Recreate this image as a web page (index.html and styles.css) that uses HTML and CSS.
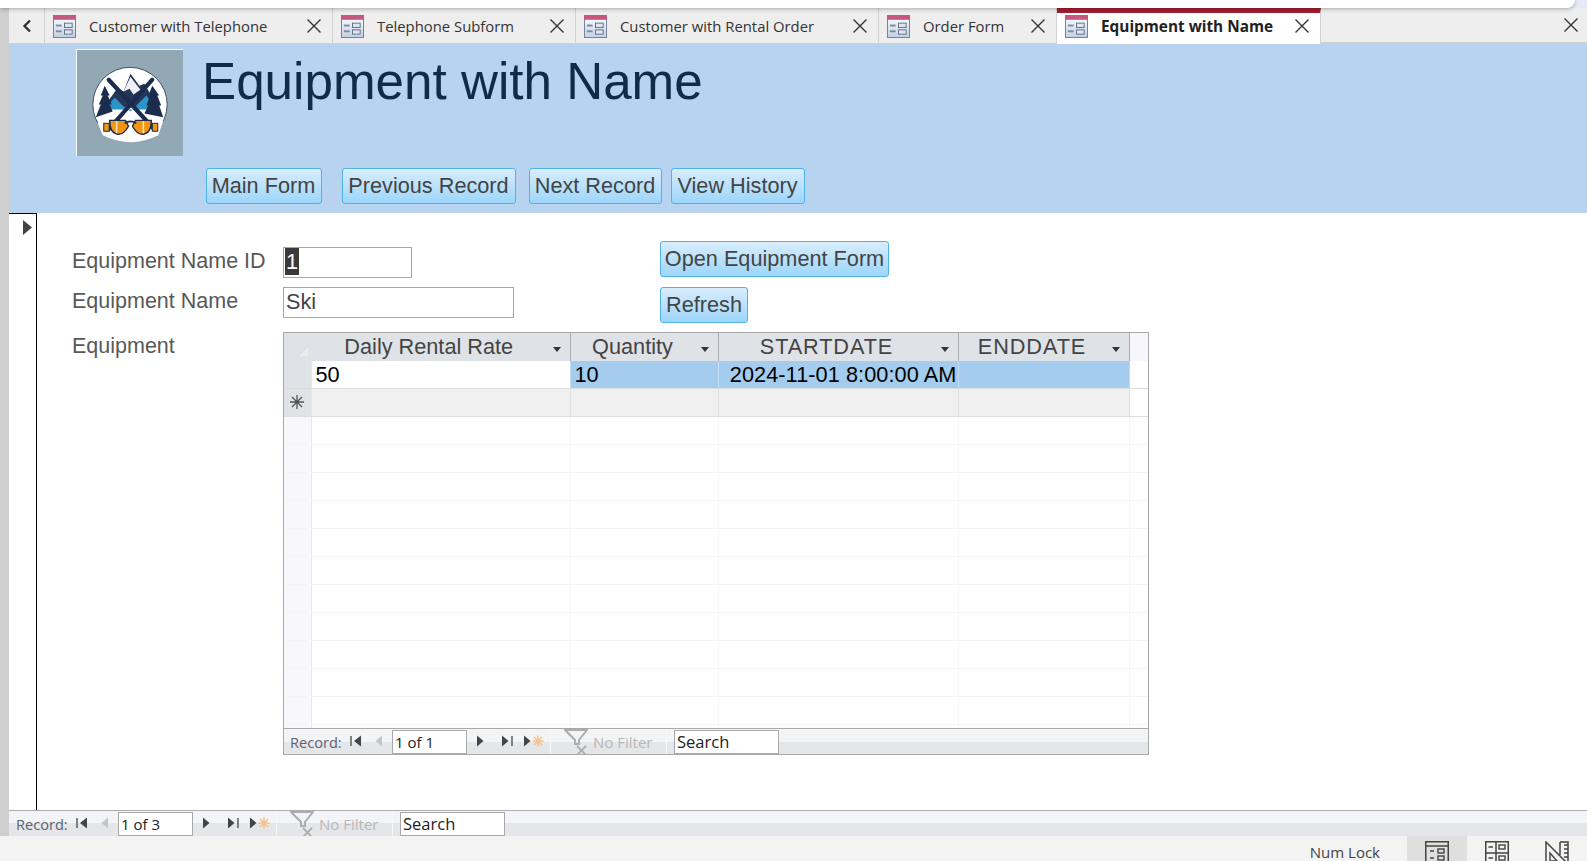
FILE: index.html
```html
<!DOCTYPE html>
<html lang="en">
<head>
    <meta charset="UTF-8">
    <title>Equipment with Name</title>
    <link rel="stylesheet" href="styles.css">
</head>
<body>

<svg class="defs" width="0" height="0">
    <defs>
        <linearGradient id="form-body" x1="0" y1="0" x2="0" y2="1">
            <stop offset="0" stop-color="#ffffff"/>
            <stop offset="1" stop-color="#c3d0e4"/>
        </linearGradient>
        <symbol id="i-form" viewBox="0 0 24 24">
            <rect x="0.5" y="0.5" width="23" height="23" fill="url(#form-body)" stroke="#6d7f9c"/>
            <rect x="0" y="0" width="24" height="5" fill="#c4587f"/>
            <rect x="3" y="10" width="6" height="2" fill="#7c8ba3"/>
            <rect x="3" y="16" width="6" height="2" fill="#7c8ba3"/>
            <rect x="12" y="8.5" width="8" height="4.5" fill="#dfe6f1" stroke="#63708a"/>
            <rect x="12" y="15.5" width="8" height="4.5" fill="#dfe6f1" stroke="#63708a"/>
        </symbol>
        <symbol id="i-close" viewBox="0 0 14 14">
            <path d="M0.5 0.5 L13.5 13.5 M13.5 0.5 L0.5 13.5" stroke="#333" stroke-width="1.4" fill="none"/>
        </symbol>
        <symbol id="i-first" viewBox="0 0 12 12">
            <path d="M1 1 V11" stroke="#444" stroke-width="1.3"/>
            <path d="M11 0.5 V11.5 L4 6 Z" fill="#444"/>
        </symbol>
        <symbol id="i-prev" viewBox="0 0 7 12">
            <path d="M7 0.5 V11.5 L0.5 6 Z" fill="#c4c4c4"/>
        </symbol>
        <symbol id="i-next" viewBox="0 0 7 12">
            <path d="M0 0.5 V11.5 L6.5 6 Z" fill="#444"/>
        </symbol>
        <symbol id="i-last" viewBox="0 0 11 12">
            <path d="M0 0.5 V11.5 L6.5 6 Z" fill="#444"/>
            <path d="M10 1 V11" stroke="#444" stroke-width="1.3"/>
        </symbol>
        <symbol id="i-new" viewBox="0 0 20 12">
            <path d="M0 0.5 V11.5 L6.5 6 Z" fill="#444"/>
            <path d="M14 0.5 V11.5 M8.5 6 H19.5 M10 2 L18 10 M18 2 L10 10" stroke="#f2c68a" stroke-width="1.6"/>
        </symbol>
        <symbol id="i-filter" viewBox="0 0 24 26">
            <path d="M1 1 H23 L15 11 V15 H11 V11 Z" fill="none" stroke="#adadad" stroke-width="2"/>
            <path d="M13 17 L22 26 M22 17 L13 26" stroke="#adadad" stroke-width="1.8"/>
        </symbol>
    </defs>
</svg>

<div class="top-strip"><div class="top-window"></div></div>

<div class="main">
    <div class="edge"></div>
    <div class="workspace">

        <div class="tabs">
            <div class="tab tab-back">
                <svg width="10" height="14" viewBox="0 0 10 14"><path d="M8 1.5 L2.5 7 L8 12.5" fill="none" stroke="#333" stroke-width="2.4"/></svg>
            </div>
            <div class="tab">
                <svg class="tab-icon"><use href="#i-form"/></svg>
                <span class="tab-text">Customer with Telephone</span>
                <svg class="tab-close"><use href="#i-close"/></svg>
            </div>
            <div class="tab">
                <svg class="tab-icon"><use href="#i-form"/></svg>
                <span class="tab-text">Telephone Subform</span>
                <svg class="tab-close"><use href="#i-close"/></svg>
            </div>
            <div class="tab">
                <svg class="tab-icon"><use href="#i-form"/></svg>
                <span class="tab-text">Customer with Rental Order</span>
                <svg class="tab-close"><use href="#i-close"/></svg>
            </div>
            <div class="tab">
                <svg class="tab-icon"><use href="#i-form"/></svg>
                <span class="tab-text">Order Form</span>
                <svg class="tab-close"><use href="#i-close"/></svg>
            </div>
            <div class="tab tab-active">
                <svg class="tab-icon"><use href="#i-form"/></svg>
                <span class="tab-text">Equipment with Name</span>
                <svg class="tab-close"><use href="#i-close"/></svg>
            </div>
            <div class="tab-rest"></div>
            <div class="tab-end"><svg class="tab-close"><use href="#i-close"/></svg></div>
        </div>

        <div class="form-header">
            <div class="title-row">
                <svg class="logo" viewBox="0 0 107 107">
                    <circle cx="53.5" cy="55" r="37.5" fill="#fff" stroke="#1b2c4d" stroke-width="0.8"/>
                    <path d="M27 58 L41 38 L47 42 L54 24 L63 36 L68 34 L82 58 Z" fill="#24365a"/>
                    <path d="M54 27 L47 42 L53 39 L57 45 L64 40 Z" fill="#eef1f5"/>
                    <path d="M28 60 L38 48 L46 56 L54 62 L62 54 L70 46 L80 60 Z" fill="#2a94c8"/>
                    <path d="M21 74 Q36 58 54 62 Q72 58 87 72 L82 86 Q54 100 26 86 Z" fill="#fff"/>
                    <path d="M28 36 L24 46 L26 46 L22 55 L24 55 L19 68 L36 62 L33 55 L35 55 L31 46 L33 46 Z" fill="#1b2c4d"/>
                    <path d="M76 36 L72 46 L74 46 L70 56 L72 56 L68 64 L87 68 L83 56 L85 56 L81 46 L83 46 Z" fill="#1b2c4d"/>
                    <path d="M32 30 L78 80 M76 30 L32 80" stroke="#1b2c4d" stroke-width="4.2" stroke-linecap="round"/>
                    <rect x="27" y="74" width="5.5" height="8" fill="#f2960f" stroke="#1b2c4d"/>
                    <rect x="76" y="74" width="5.5" height="8" fill="#f2960f" stroke="#1b2c4d"/>
                    <path d="M33 71 H49 L52 77 Q47 86 41 85 Q33 84 33 71 Z" fill="#f2960f" stroke="#1b2c4d" stroke-width="1.4"/>
                    <path d="M75 71 H59 L56 77 Q61 86 67 85 Q75 84 75 71 Z" fill="#f2960f" stroke="#1b2c4d" stroke-width="1.4"/>
                    <path d="M40 72 V84 M67 72 V84" stroke="#fde5c0" stroke-width="1.6"/>
                    <path d="M48 74 Q54 70 60 74" fill="none" stroke="#1b2c4d" stroke-width="1.6"/>
                </svg>
                <h1>Equipment with Name</h1>
            </div>
            <div class="header-buttons">
                <button class="btn btn-main">Main Form</button>
                <button class="btn btn-prev">Previous Record</button>
                <button class="btn btn-next">Next Record</button>
                <button class="btn btn-view">View History</button>
            </div>
        </div>

        <div class="form-body">
            <div class="record-selector">
                <svg width="9" height="15" viewBox="0 0 9 15"><path d="M0 0 V15 L9 7.5 Z" fill="#444"/></svg>
            </div>
            <div class="form-grid">
                <label class="field-label">Equipment Name ID</label>
                <div class="field field-first"><div class="input input-id"><span class="selected">1</span></div></div>
                <button class="btn btn-open">Open Equipment Form</button>

                <label class="field-label label-second">Equipment Name</label>
                <div class="field"><div class="input input-name">Ski</div></div>
                <button class="btn btn-refresh">Refresh</button>

                <label class="field-label label-third">Equipment</label>
                <div class="subform">
                    <table class="sheet">
                        <colgroup>
                            <col class="c-sel"><col class="c-rate"><col class="c-qty"><col class="c-start"><col class="c-end"><col>
                        </colgroup>
                        <thead>
                            <tr>
                                <th class="corner">
                                    <svg width="12" height="12" viewBox="0 0 12 12"><path d="M0 12 L12 0 V12 Z" fill="#e9ebee" stroke="#cfd3d8" stroke-width="0.6"/></svg>
                                </th>
                                <th>Daily Rental Rate<i class="drop"></i></th>
                                <th>Quantity<i class="drop"></i></th>
                                <th class="caps">STARTDATE<i class="drop"></i></th>
                                <th class="caps">ENDDATE<i class="drop"></i></th>
                                <th class="head-rest"></th>
                            </tr>
                        </thead>
                        <tbody>
                            <tr class="row-data">
                                <td class="sel sel-head"></td>
                                <td class="current">50</td>
                                <td>10</td>
                                <td class="date">2024-11-01 8:00:00 AM</td>
                                <td></td>
                                <td class="blank"></td>
                            </tr>
                            <tr class="row-new">
                                <td class="sel sel-head star">
                                    <svg width="14" height="14" viewBox="0 0 14 14"><path d="M7 0 V14 M0 7 H14 M2 2 L12 12 M12 2 L2 12" stroke="#555" stroke-width="1.3"/></svg>
                                </td>
                                <td></td><td></td><td></td><td></td>
                                <td class="blank"></td>
                            </tr>
                            <tr class="row-empty"><td class="sel"></td><td></td><td></td><td></td><td></td><td></td></tr>
                            <tr class="row-empty"><td class="sel"></td><td></td><td></td><td></td><td></td><td></td></tr>
                            <tr class="row-empty"><td class="sel"></td><td></td><td></td><td></td><td></td><td></td></tr>
                            <tr class="row-empty"><td class="sel"></td><td></td><td></td><td></td><td></td><td></td></tr>
                            <tr class="row-empty"><td class="sel"></td><td></td><td></td><td></td><td></td><td></td></tr>
                            <tr class="row-empty"><td class="sel"></td><td></td><td></td><td></td><td></td><td></td></tr>
                            <tr class="row-empty"><td class="sel"></td><td></td><td></td><td></td><td></td><td></td></tr>
                            <tr class="row-empty"><td class="sel"></td><td></td><td></td><td></td><td></td><td></td></tr>
                            <tr class="row-empty"><td class="sel"></td><td></td><td></td><td></td><td></td><td></td></tr>
                            <tr class="row-empty"><td class="sel"></td><td></td><td></td><td></td><td></td><td></td></tr>
                            <tr class="row-empty"><td class="sel"></td><td></td><td></td><td></td><td></td><td></td></tr>
                            <tr class="row-empty row-cut"><td class="sel"></td><td></td><td></td><td></td><td></td><td></td></tr>
                        </tbody>
                    </table>
                    <div class="recbar recbar-sub">
                        <span class="rec-label">Record:</span>
                        <svg class="nav nav-first"><use href="#i-first"/></svg>
                        <svg class="nav nav-prev"><use href="#i-prev"/></svg>
                        <div class="rec-input">1 of 1</div>
                        <svg class="nav nav-next"><use href="#i-next"/></svg>
                        <svg class="nav nav-last"><use href="#i-last"/></svg>
                        <svg class="nav nav-new"><use href="#i-new"/></svg>
                        <div class="rec-filter"><svg class="filter-icon"><use href="#i-filter"/></svg>No Filter</div>
                        <div class="rec-input rec-search">Search</div>
                    </div>
                </div>
            </div>
        </div>

        <div class="recbar recbar-main">
            <span class="rec-label">Record:</span>
            <svg class="nav nav-first"><use href="#i-first"/></svg>
            <svg class="nav nav-prev"><use href="#i-prev"/></svg>
            <div class="rec-input">1 of 3</div>
            <svg class="nav nav-next"><use href="#i-next"/></svg>
            <svg class="nav nav-last"><use href="#i-last"/></svg>
            <svg class="nav nav-new"><use href="#i-new"/></svg>
            <div class="rec-filter"><svg class="filter-icon"><use href="#i-filter"/></svg>No Filter</div>
            <div class="rec-input rec-search">Search</div>
        </div>
    </div>
</div>

<div class="status-bar">
    <span class="num-lock">Num Lock</span>
    <div class="view-btn view-active">
        <svg width="24" height="24" viewBox="0 0 24 24">
            <rect x="0.75" y="0.75" width="22.5" height="23" fill="none" stroke="#444" stroke-width="1.5"/>
            <path d="M1 5 H23" stroke="#444" stroke-width="1.5"/>
            <path d="M5 10 H9 M5 17 H9" stroke="#444" stroke-width="1.5"/>
            <rect x="13" y="8" width="6" height="4" fill="none" stroke="#444" stroke-width="1.4"/>
            <rect x="13" y="15" width="6" height="4" fill="none" stroke="#444" stroke-width="1.4"/>
        </svg>
    </div>
    <div class="view-btn">
        <svg width="24" height="24" viewBox="0 0 24 24">
            <rect x="0.75" y="0.75" width="22.5" height="23" fill="none" stroke="#444" stroke-width="1.5"/>
            <path d="M11 1 V24 M1 12 H23" stroke="#444" stroke-width="1.5"/>
            <path d="M3.5 6 H8" stroke="#444" stroke-width="1.5"/>
            <rect x="14" y="4" width="6" height="4" fill="none" stroke="#444" stroke-width="1.4"/>
            <path d="M3.5 17 H8" stroke="#444" stroke-width="1.5"/>
            <rect x="14" y="15" width="6" height="4" fill="none" stroke="#444" stroke-width="1.4"/>
        </svg>
    </div>
    <div class="view-btn">
        <svg width="24" height="24" viewBox="0 0 24 24">
            <path d="M1 1 L23 23 H1 Z" fill="none" stroke="#444" stroke-width="1.5"/>
            <path d="M5 12 L12 20 H5 Z" fill="none" stroke="#444" stroke-width="1.4"/>
            <path d="M15 1 H23 V23 M15 1 V14 M19 4 H23 M19 8 H23 M19 12 H23 M19 16 H23" fill="none" stroke="#444" stroke-width="1.5"/>
        </svg>
    </div>
</div>

</body>
</html>
```
FILE: styles.css
```css
* {
    box-sizing: border-box;
}
html, body {
    margin: 0;
    height: 861px;
    overflow: hidden;
    background: #f3f3f3;
}
body {
    font-family: "Liberation Sans", Arial, sans-serif;
}
.defs {
    position: absolute;
}

/* strip of the window above the tabs */
.top-strip {
    height: 8px;
    background: #e7e9f6;
    position: relative;
    z-index: 2;
}
.top-window {
    width: 1575px;
    height: 8px;
    background: #fff;
    border-bottom-right-radius: 9px;
    box-shadow: 0 1px 4px rgba(0, 0, 0, 0.3);
}

.main {
    display: flex;
    height: 828px;
}
.edge {
    width: 9px;
    background: #cfcfcf;
    flex-shrink: 0;
}
.workspace {
    flex: 1;
    display: flex;
    flex-direction: column;
    min-width: 0;
}

/* tabs */
.tabs {
    height: 36px;
    display: grid;
    grid-template-columns: 36px 288px 243px 303px 178px 264px 1fr 36px;
    background: #eeeeee;
    font-family: "Open Sans", sans-serif;
    font-size: 14.85px;
    color: #333;
}
.tab {
    display: flex;
    align-items: center;
    padding: 1px 11px 0 8px;
    border-right: 1px solid #d2d2d2;
    border-bottom: 1px solid #d0d0d0;
}
.tab-back {
    justify-content: center;
    padding: 1px 0 0;
}
.tab-icon {
    width: 23px;
    height: 23px;
    flex-shrink: 0;
    margin-right: 13px;
}
.tab-text {
    white-space: nowrap;
    flex: 1;
}
.tab-close {
    width: 14px;
    height: 14px;
    flex-shrink: 0;
}
.tab-active {
    background: #fff;
    border-top: 5px solid #a51c30;
    border-bottom: 0;
    font-size: 15.35px;
    font-weight: 700;
    color: #222;
    padding-bottom: 5px;
    padding-top: 0;
}
.tab-rest {
    border-bottom: 2px solid #cfcfcf;
}
.tab-end {
    display: flex;
    align-items: center;
    justify-content: center;
    border-bottom: 2px solid #cfcfcf;
    padding-left: 4px;
}

/* blue form header */
.form-header {
    height: 169px;
    background: #b8d3ef;
    padding: 5px 0 0 67px;
}
.title-row {
    display: flex;
    height: 107px;
}
.logo {
    width: 107px;
    height: 107px;
    background: #93a8b5;
    border-top: 1px solid #fff;
    border-left: 1px solid #fff;
}
h1 {
    margin: 3px 0 0 19px;
    font-size: 51.2px;
    line-height: 60px;
    font-weight: 400;
    color: #0f2b4a;
}
.header-buttons {
    display: flex;
    margin: 12px 0 0 129.5px;
}
.btn {
    height: 36px;
    padding: 0;
    font-family: "Liberation Sans", Arial, sans-serif;
    font-size: 21.7px;
    color: #444;
    background: linear-gradient(#d8edfc, #9dd6fb);
    border: 1px solid #4fb3e5;
    border-radius: 3px;
    text-align: center;
}
.btn-main { width: 116px; margin-right: 20px; }
.btn-prev { width: 174px; margin-right: 13px; }
.btn-next { width: 133px; margin-right: 9px; }
.btn-view { width: 134px; }
.btn-open { width: 229px; justify-self: start; }
.btn-refresh { width: 88px; justify-self: start; }

/* form body */
.form-body {
    height: 597px;
    display: flex;
    background: #fff;
}
.record-selector {
    width: 28px;
    flex-shrink: 0;
    border-top: 1px solid #000;
    border-right: 1.5px solid #000;
    padding: 6px 0 0 14px;
}
.form-grid {
    display: grid;
    grid-template-columns: 211px 377px auto;
    grid-template-rows: 46px 45px 423px;
    padding: 28px 0 0 35px;
    flex: 1;
}
.field-label {
    font-size: 21.5px;
    line-height: 31px;
    margin-top: 5px;
    color: #595959;
}
.label-second,
.label-third {
    margin-top: -1px;
}
.field-first {
    padding-top: 6px;
}
.input {
    height: 31px;
    border: 1px solid #a6a6a6;
    background: #fff;
    font-size: 21.7px;
    line-height: 28px;
    padding-left: 1px;
    color: #444;
    white-space: nowrap;
}
.input-id { width: 129px; }
.input-name { width: 231px; padding-left: 2px; }
.selected {
    display: inline-block;
    background: #3a3a3a;
    color: #fff;
    padding: 0 1px;
    height: 27px;
}

/* subform datasheet */
.subform {
    grid-column: 2 / 4;
    width: 866px;
    height: 423px;
    border: 1px solid #a9a9a9;
    display: flex;
    flex-direction: column;
    overflow: hidden;
}
.sheet {
    table-layout: fixed;
    border-collapse: collapse;
    width: 864px;
    height: 395px;
    font-size: 21.7px;
}
.c-sel { width: 27px; }
.c-rate { width: 259px; }
.c-qty { width: 148px; }
.c-start { width: 240px; }
.c-end { width: 171px; }
.sheet th {
    height: 28px;
    padding: 0 23px 0 0;
    background: #dfe2e6;
    font-weight: 400;
    color: #444;
    text-align: center;
    position: relative;
    border-right: 1px solid #a9adb2;
    white-space: nowrap;
}
.sheet th.corner {
    border-right: 0;
    padding: 8px 2px 0 13px;
    line-height: 0;
}
.sheet th.caps {
    letter-spacing: 0.9px;
}
.sheet th.head-rest {
    background: #f6f6fc;
    border: 0;
}
.drop {
    position: absolute;
    right: 9px;
    top: 14px;
    width: 0;
    height: 0;
    border-left: 4px solid transparent;
    border-right: 4px solid transparent;
    border-top: 5px solid #333;
}
.sheet td {
    padding: 0 0 0 4px;
    height: 28px;
    color: #000;
    white-space: nowrap;
    overflow: hidden;
}
.sheet td.sel {
    background: #f7f7fc;
    padding: 0;
    border-right: 1px solid #e6e6ee;
}
.sheet td.sel-head {
    background: #dfe2e6;
}
.star svg {
    display: block;
    margin: 0 auto;
}
.row-data td {
    height: 27px;
    line-height: 25px;
    padding-top: 1px;
    background: #a3ccee;
    border-right: 1px solid #c5dcf2;
    border-bottom: 1px solid #dcdcdc;
}
.row-data td.current {
    background: #fff;
}
.row-data td.date {
    text-align: right;
    padding: 1px 1px 0 0;
    letter-spacing: 0.08px;
}
.row-data td.blank,
.row-new td.blank {
    background: #fff;
    border-right: 0;
}
.row-new td {
    background: #f0f0f0;
    border-right: 1px solid #e4e4e4;
    border-bottom: 1px solid #dedede;
}
.row-empty td {
    border-right: 1px solid #f6f6f6;
    border-bottom: 1px solid #f4f4f4;
}
.row-empty td:last-child {
    border-right: 0;
}
.row-cut td {
    height: 4px;
    border-bottom: 0;
}

/* record navigation bar */
.recbar {
    display: grid;
    grid-template-columns: 56px 20px 24px 77px 27px 26px 30px 117px 112px 1fr;
    align-items: center;
    height: 26px;
    font-family: "Open Sans", sans-serif;
    font-size: 14.6px;
    background: linear-gradient(#f3f4f6 50%, #e5e6e9 50%);
    border-top: 1.5px solid #a9abb5;
    color: #555;
}
.recbar-main {
    padding-left: 7px;
    flex-shrink: 0;
}
.recbar-sub {
    padding-left: 6px;
    width: 100%;
    flex-shrink: 0;
    border-top: 1.5px solid #a9a9a9;
}
.rec-label {
    white-space: nowrap;
    color: #5a6270;
    padding-top: 1px;
}
.nav {
    justify-self: center;
    height: 12px;
    margin-bottom: 1px;
}
.nav-first { width: 12px; }
.nav-prev, .nav-next { width: 7px; }
.nav-last { width: 11px; }
.nav-new { width: 20px; justify-self: start; margin-left: 4px; }
.rec-input {
    justify-self: end;
    width: 75px;
    height: 24px;
    background: #fff;
    border: 1px solid #a9a9a9;
    font-size: 15px;
    line-height: 22px;
    padding-left: 2px;
    color: #222;
    white-space: nowrap;
}
.rec-filter {
    display: flex;
    align-items: center;
    height: 100%;
    padding: 1px 0 0 14px;
    border-left: 1.5px solid #f8f8f8;
    border-right: 1.5px solid #f8f8f8;
    font-size: 15px;
    color: #b8b8b8;
    white-space: nowrap;
    overflow: hidden;
}
.filter-icon {
    width: 24px;
    height: 26px;
    margin: 0 5px 0 -1px;
    flex-shrink: 0;
}
.rec-search {
    width: 105px;
    font-size: 16.5px;
}

/* status bar */
.status-bar {
    height: 25px;
    display: flex;
    justify-content: flex-end;
    background: #f3f3f3;
    font-family: "Open Sans", sans-serif;
    font-size: 15px;
    color: #444;
    overflow: hidden;
}
.num-lock {
    margin-right: 27px;
    padding-top: 6px;
}
.view-btn {
    width: 60px;
    padding: 5px 0 0 18px;
}
.view-active {
    background: #dfdfdf;
}
```
